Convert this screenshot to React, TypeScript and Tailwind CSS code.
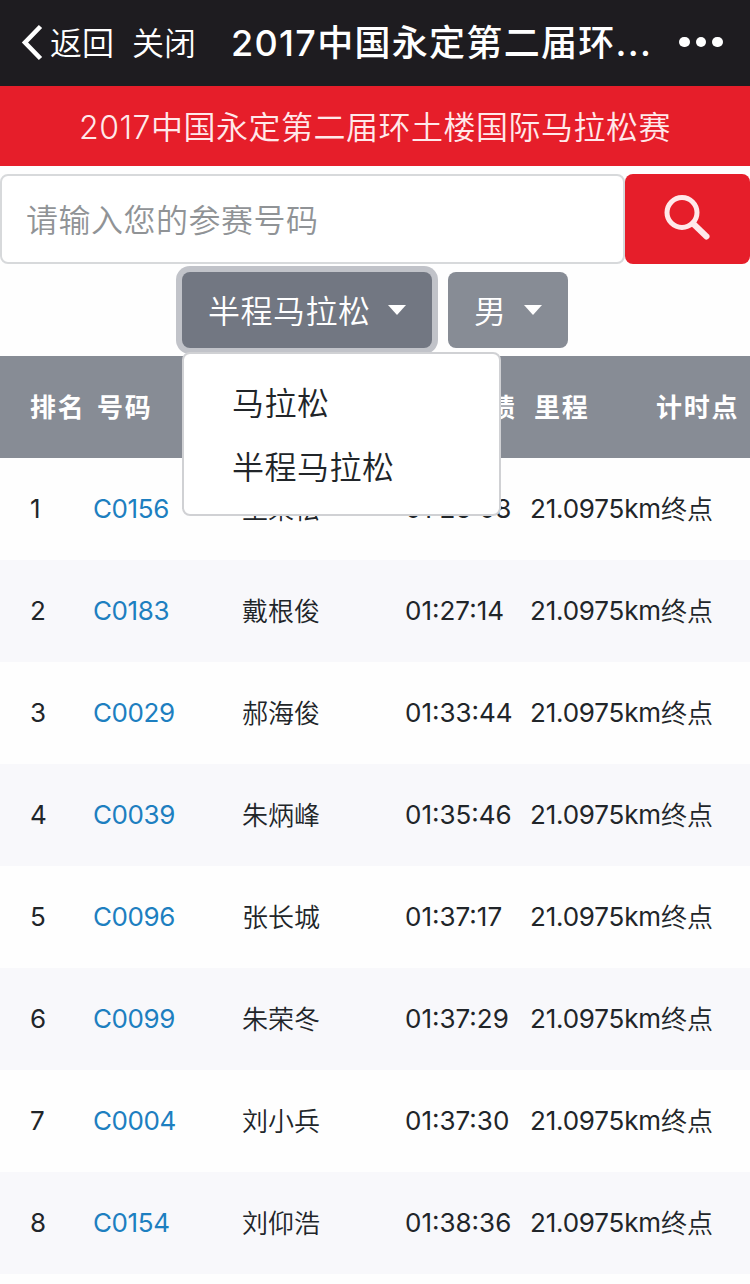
import React from 'react';

type Result = { rank: number; bib: string; name: string; time: string };

const results: Result[] = [
  { rank: 1, bib: 'C0156', name: '王荣松', time: '01:26:08' },
  { rank: 2, bib: 'C0183', name: '戴根俊', time: '01:27:14' },
  { rank: 3, bib: 'C0029', name: '郝海俊', time: '01:33:44' },
  { rank: 4, bib: 'C0039', name: '朱炳峰', time: '01:35:46' },
  { rank: 5, bib: 'C0096', name: '张长城', time: '01:37:17' },
  { rank: 6, bib: 'C0099', name: '朱荣冬', time: '01:37:29' },
  { rank: 7, bib: 'C0004', name: '刘小兵', time: '01:37:30' },
  { rank: 8, bib: 'C0154', name: '刘仰浩', time: '01:38:36' },
];

const Caret = () => (
  <span className="h-0 w-0 border-x-[9px] border-t-[10px] border-x-transparent border-t-white" />
);

function NavBar() {
  return (
    <header className="flex h-[86px] items-center bg-[#1e1c20] text-white">
      <svg className="ml-5 h-10 w-6 shrink-0" viewBox="0 0 24 40" fill="none" stroke="currentColor" strokeWidth="4.6">
        <path d="M20.5 3.5 L5 19.5 L20.5 35.5" />
      </svg>
      <span className="ml-[6px] w-[82px] pt-[2px] text-[32px] font-[350] leading-none">返回</span>
      <span className="w-[99px] pt-[2px] text-[32px] font-[350] leading-none">关闭</span>
      <h1 className="w-[448px] whitespace-nowrap text-[36px] font-medium leading-none tracking-[1.3px]">
        2017中国永定第二届环...
      </h1>
      <span className="flex gap-[6px] pb-[2px]">
        <i className="h-[10.5px] w-[10.5px] rounded-full bg-white" />
        <i className="h-[10.5px] w-[10.5px] rounded-full bg-white" />
        <i className="h-[10.5px] w-[10.5px] rounded-full bg-white" />
      </span>
    </header>
  );
}

function SearchBar() {
  return (
    <div className="mt-2 flex h-[90px]">
      <div className="flex w-[625px] items-center rounded-lg border-2 border-[#d7d9db] bg-white pl-[24px] pt-[4px] text-[32px] font-[350] tracking-[0.5px] text-[#909396]">
        请输入您的参赛号码
      </div>
      <button className="flex flex-1 items-center justify-center rounded-lg bg-[#e61e2a]">
        <svg className="h-12 w-12" viewBox="0 0 48 48" fill="none" stroke="#ffe9ea">
          <circle cx="18" cy="17.5" r="15" strokeWidth="5" />
          <path d="M29 28.5 L42.5 41.5" strokeWidth="6" strokeLinecap="round" />
        </svg>
      </button>
    </div>
  );
}

function Filters() {
  return (
    <div className="mt-2 flex h-[84px] gap-4 pl-[182px] text-[32px] font-[350] text-white">
      <div className="relative h-[76px] w-[250px]">
        <button className="flex h-full w-full items-center rounded-lg bg-[#727782] pl-[26px] shadow-[0_0_0_6px_#c1c3c9]">
          <span className="w-[180px] pt-[3px] text-left tracking-[0.5px]">半程马拉松</span>
          <Caret />
        </button>
        <ul className="absolute left-0 top-20 z-10 h-[164px] w-[319px] rounded-lg border-2 border-[#d0d1d4] bg-white pl-[48px] pt-[18px] leading-[64px] tracking-[0.5px] text-[#212529]">
          <li>马拉松</li>
          <li>半程马拉松</li>
        </ul>
      </div>
      <button className="flex h-[76px] w-[120px] items-center rounded-lg bg-[#878c95] pl-[26px]">
        <span className="w-[50px] pt-[3px] text-left">男</span>
        <Caret />
      </button>
    </div>
  );
}

function ResultsTable() {
  return (
    <section className="text-[26px] text-[#212529]">
      <div className="grid h-[102px] grid-cols-[67px_145px_219px_73px_122px_1fr] items-center whitespace-nowrap bg-[#878c95] pl-[30px] font-bold tracking-[1.8px] text-white">
        <span>排名</span>
        <span>号码</span>
        <span>姓名</span>
        <span>成绩</span>
        <span>里程</span>
        <span>计时点</span>
      </div>
      {results.map((r) => (
        <div
          key={r.rank}
          className="grid h-[102px] grid-cols-[63px_149px_163px_125px_131px_1fr] items-center whitespace-nowrap pl-[30px] odd:bg-[#f8f8fb]"
        >
          <span className="pb-[2px]">{r.rank}</span>
          <span className="pb-[2px] tracking-[-0.4px] text-[#1d7fc0]">{r.bib}</span>
          <span className="font-[350]">{r.name}</span>
          <span className="pb-[2px]">{r.time}</span>
          <span className="pb-[2px] tracking-[-0.2px]">21.0975km</span>
          <span className="font-[350]">终点</span>
        </div>
      ))}
    </section>
  );
}

export default function App() {
  return (
    <main className="h-[1284px] w-[750px] overflow-hidden bg-[#fefefe] font-[Inter,'Noto_Sans_CJK_SC',sans-serif]">
      <NavBar />
      <div className="flex h-20 items-center justify-center bg-[#e61e2a] pt-[3px] text-[32px] font-[350] tracking-[0.5px] text-[#ffe9ea]">
        2017中国永定第二届环土楼国际马拉松赛
      </div>
      <SearchBar />
      <Filters />
      <ResultsTable />
    </main>
  );
}
